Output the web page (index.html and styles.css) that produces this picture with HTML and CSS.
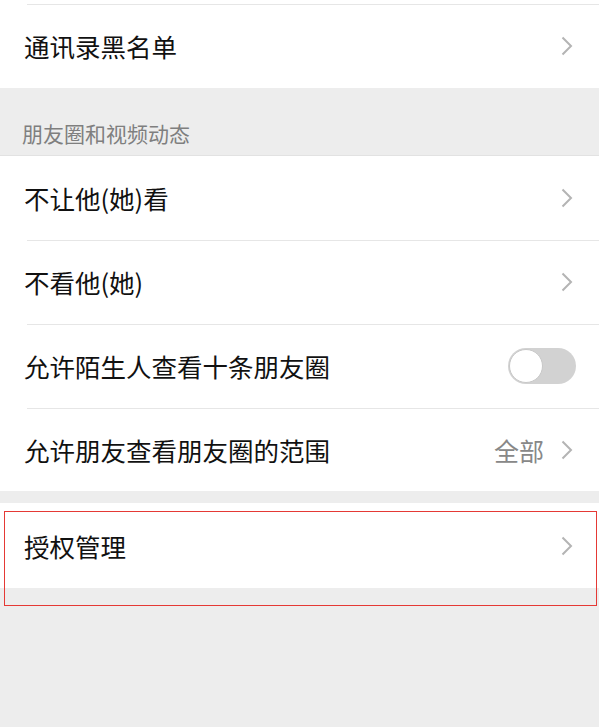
FILE: index.html
```html
<!DOCTYPE html>
<html lang="zh-CN">
<head>
    <meta charset="UTF-8">
    <meta name="viewport" content="width=device-width, initial-scale=1.0">
    <title>朋友权限</title>
    <link rel="stylesheet" href="styles.css">
</head>
<body>
    <div class="group">
        <div class="row-tail"></div>
        <div class="row with-line">
            <span class="label">通讯录黑名单</span>
            <svg class="chevron" viewBox="0 0 12 20"><path d="M1.5 1.5 L10 10 L1.5 18.5"/></svg>
        </div>
    </div>

    <div class="group-title">朋友圈和视频动态</div>

    <div class="group bordered">
        <div class="row">
            <span class="label">不让他(她)看</span>
            <svg class="chevron" viewBox="0 0 12 20"><path d="M1.5 1.5 L10 10 L1.5 18.5"/></svg>
        </div>
        <div class="row with-line">
            <span class="label">不看他(她)</span>
            <svg class="chevron" viewBox="0 0 12 20"><path d="M1.5 1.5 L10 10 L1.5 18.5"/></svg>
        </div>
        <div class="row with-line">
            <span class="label">允许陌生人查看十条朋友圈</span>
            <span class="switch"><span class="knob"></span></span>
        </div>
        <div class="row with-line last">
            <span class="label">允许朋友查看朋友圈的范围</span>
            <span class="value">全部</span>
            <svg class="chevron" viewBox="0 0 12 20"><path d="M1.5 1.5 L10 10 L1.5 18.5"/></svg>
        </div>
    </div>

    <div class="marked">
        <div class="group">
            <div class="row auth">
                <span class="label">授权管理</span>
                <svg class="chevron" viewBox="0 0 12 20"><path d="M1.5 1.5 L10 10 L1.5 18.5"/></svg>
            </div>
        </div>
        <div class="mark"></div>
    </div>
</body>
</html>
```

FILE: styles.css
```css
body {
    margin: 0;
    min-height: 100vh;
    background-color: #ededed;
    font-family: "Noto Sans CJK SC", "Noto Sans", sans-serif;
    color: #111;
}

.group {
    background-color: #fff;
}

.group.bordered {
    border-top: 1px solid #e2e2e2;
}

.row-tail {
    height: 4px;
}

.row {
    display: flex;
    align-items: center;
    height: 84px;
    padding: 0 26px 0 24px;
    box-sizing: border-box;
}

.row.with-line {
    background: linear-gradient(#e6e6e6, #e6e6e6) 27px 0 / 100% 1px no-repeat, #fff;
}

.row.last {
    height: 83px;
}

.row.auth {
    height: 85px;
}

.label {
    flex: 1;
    font-size: 25.5px;
    line-height: 30px;
}

.value {
    font-size: 25px;
    color: #888;
    margin-right: 17px;
}

.chevron {
    width: 12px;
    height: 20px;
    fill: none;
    stroke: #b4b4b4;
    stroke-width: 2;
}

.group-title {
    padding: 30px 22px 7px;
    font-size: 21px;
    line-height: 30px;
    color: #7f7f7f;
}

/* interruptor apagado */
.switch {
    display: flex;
    align-items: center;
    width: 68px;
    height: 36px;
    margin-right: -3px;
    border-radius: 18px;
    background-color: #d2d2d2;
}

.knob {
    width: 32px;
    height: 32px;
    margin-left: 1px;
    border-radius: 50%;
    background-color: #fff;
    border: 1px solid #c8c8c8;
}

/* recuadro rojo de la captura */
.marked {
    position: relative;
    margin-top: 12px;
    padding-bottom: 20px;
}

.mark {
    position: absolute;
    top: 8px;
    left: 4px;
    right: 2px;
    bottom: 2px;
    border: 1.5px solid #e53935;
}
```
